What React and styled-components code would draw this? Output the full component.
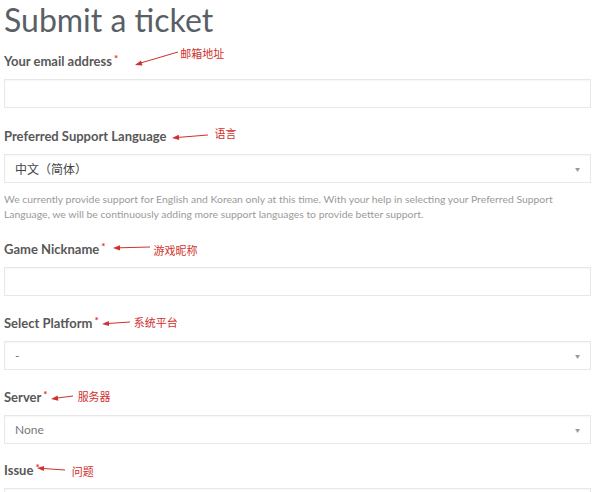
import React from "react";
import styled, { createGlobalStyle } from "styled-components";

const Global = createGlobalStyle`
  html, body {
    margin: 0;
    padding: 0;
    background: #fff;
  }
  body {
    font-family: Lato, "Noto Sans CJK SC", sans-serif;
    color: #555;
    overflow: hidden;
  }
`;

const Page = styled.div`
  width: 587px;
  padding: 0 8px 0 4px;
`;

const Title = styled.h1`
  margin: 0 0 11px;
  font-size: 32px;
  line-height: 40px;
  font-weight: 400;
  color: #5a5f66;
`;

const Field = styled.div`
  margin-bottom: ${(p) => p.$gap ?? 18}px;
`;

const Label = styled.div`
  display: flex;
  align-items: center;
  height: 20px;
  margin-bottom: 8px;
  font-size: 13px;
  font-weight: 700;
  color: #585858;
`;

const Required = styled.span`
  margin-left: 2px;
  font-size: 10px;
  color: #d33;
  transform: translateY(-3px);
`;

const Annotation = styled.span`
  display: inline-flex;
  align-items: center;
  margin-left: ${(p) => p.$gap}px;
`;

const Note = styled.span`
  margin-left: ${(p) => p.$gap}px;
  font-family: "Noto Sans CJK SC", sans-serif;
  font-size: 11px;
  font-weight: 400;
  color: #d0312d;
  transform: translateY(${(p) => p.$dy}px);
`;

const Box = styled.div`
  box-sizing: border-box;
  height: 29px;
  border: 1px solid #e8e8e8;
  box-shadow: inset 0 1px 2px rgba(0, 0, 0, 0.04);
  background: #fff;
`;

const Select = styled(Box)`
  display: flex;
  align-items: center;
  justify-content: space-between;
  padding: 0 10px 0 10px;
  font-family: Lato, "Noto Sans CJK SC", sans-serif;
  font-size: 12px;
  color: ${(p) => (p.$muted ? "#777" : "#444")};
`;

const Caret = styled.span`
  font-size: 5px;
  color: #999;
`;

const Help = styled.p`
  margin: 9px 0 17px;
  font-size: 10.4px;
  line-height: 15px;
  color: #9a9a9a;
`;

function Arrow({ len, tip, tail }) {
  const h = 24;
  const y1 = h / 2 + tip;
  const y2 = h / 2 + tail;
  const ang = Math.atan2(y2 - y1, len);
  const ax = Math.cos(ang);
  const ay = Math.sin(ang);
  const hl = 7;
  const hw = 2.6;
  const bx = ax * hl;
  const by = y1 + ay * hl;
  const pts = [
    `0,${y1}`,
    `${bx - ay * hw},${by + ax * hw}`,
    `${bx + ay * hw},${by - ax * hw}`,
  ].join(" ");
  return (
    <svg width={len} height={h} style={{ overflow: "visible" }}>
      <line x1={bx - 1} y1={by} x2={len} y2={y2} stroke="#d0312d" strokeWidth="1" />
      <polygon points={pts} fill="#d0312d" />
    </svg>
  );
}

function FieldLabel({ text, required, note }) {
  return (
    <Label>
      {text}
      {required && <Required>*</Required>}
      {note && (
        <Annotation $gap={note.gap}>
          <Arrow len={note.len} tip={note.tip} tail={note.tail} />
          <Note $gap={note.textGap} $dy={note.dy}>
            {note.text}
          </Note>
        </Annotation>
      )}
    </Label>
  );
}

export default function App() {
  return (
    <Page>
      <Global />
      <Title>Submit a ticket</Title>

      <Field>
        <FieldLabel
          text="Your email address"
          required
          note={{ text: "邮箱地址", gap: 17, len: 43, tip: 4, tail: -9, textGap: 2, dy: -8 }}
        />
        <Box />
      </Field>

      <Field $gap={0}>
        <FieldLabel
          text="Preferred Support Language"
          note={{ text: "语言", gap: 6, len: 36, tip: 2, tail: -1, textGap: 6, dy: -3 }}
        />
        <Select>
          <span>中文（简体）</span>
          <Caret>▼</Caret>
        </Select>
      </Field>
      <Help>
        We currently provide support for English and Korean only at this time. With your help in selecting your Preferred Support
        <br />
        Language, we will be continuously adding more support languages to provide better support.
      </Help>

      <Field $gap={17}>
        <FieldLabel
          text="Game Nickname"
          required
          note={{ text: "游戏昵称", gap: 8, len: 37, tip: -1, tail: -2, textGap: 3, dy: 1 }}
        />
        <Box />
      </Field>

      <Field $gap={17}>
        <FieldLabel
          text="Select Platform"
          required
          note={{ text: "系统平台", gap: 3, len: 28, tip: 1, tail: -1, textGap: 4, dy: -1 }}
        />
        <Select $muted>
          <span>-</span>
          <Caret>▼</Caret>
        </Select>
      </Field>

      <Field $gap={16}>
        <FieldLabel
          text="Server"
          required
          note={{ text: "服务器", gap: 3, len: 22, tip: 2, tail: -1, textGap: 5, dy: -1 }}
        />
        <Select $muted>
          <span>None</span>
          <Caret>▼</Caret>
        </Select>
      </Field>

      <Field>
        <FieldLabel
          text="Issue"
          required
          note={{ text: "问题", gap: -3, len: 28, tip: -2, tail: 0, textGap: 7, dy: 1 }}
        />
        <Box />
      </Field>
    </Page>
  );
}
